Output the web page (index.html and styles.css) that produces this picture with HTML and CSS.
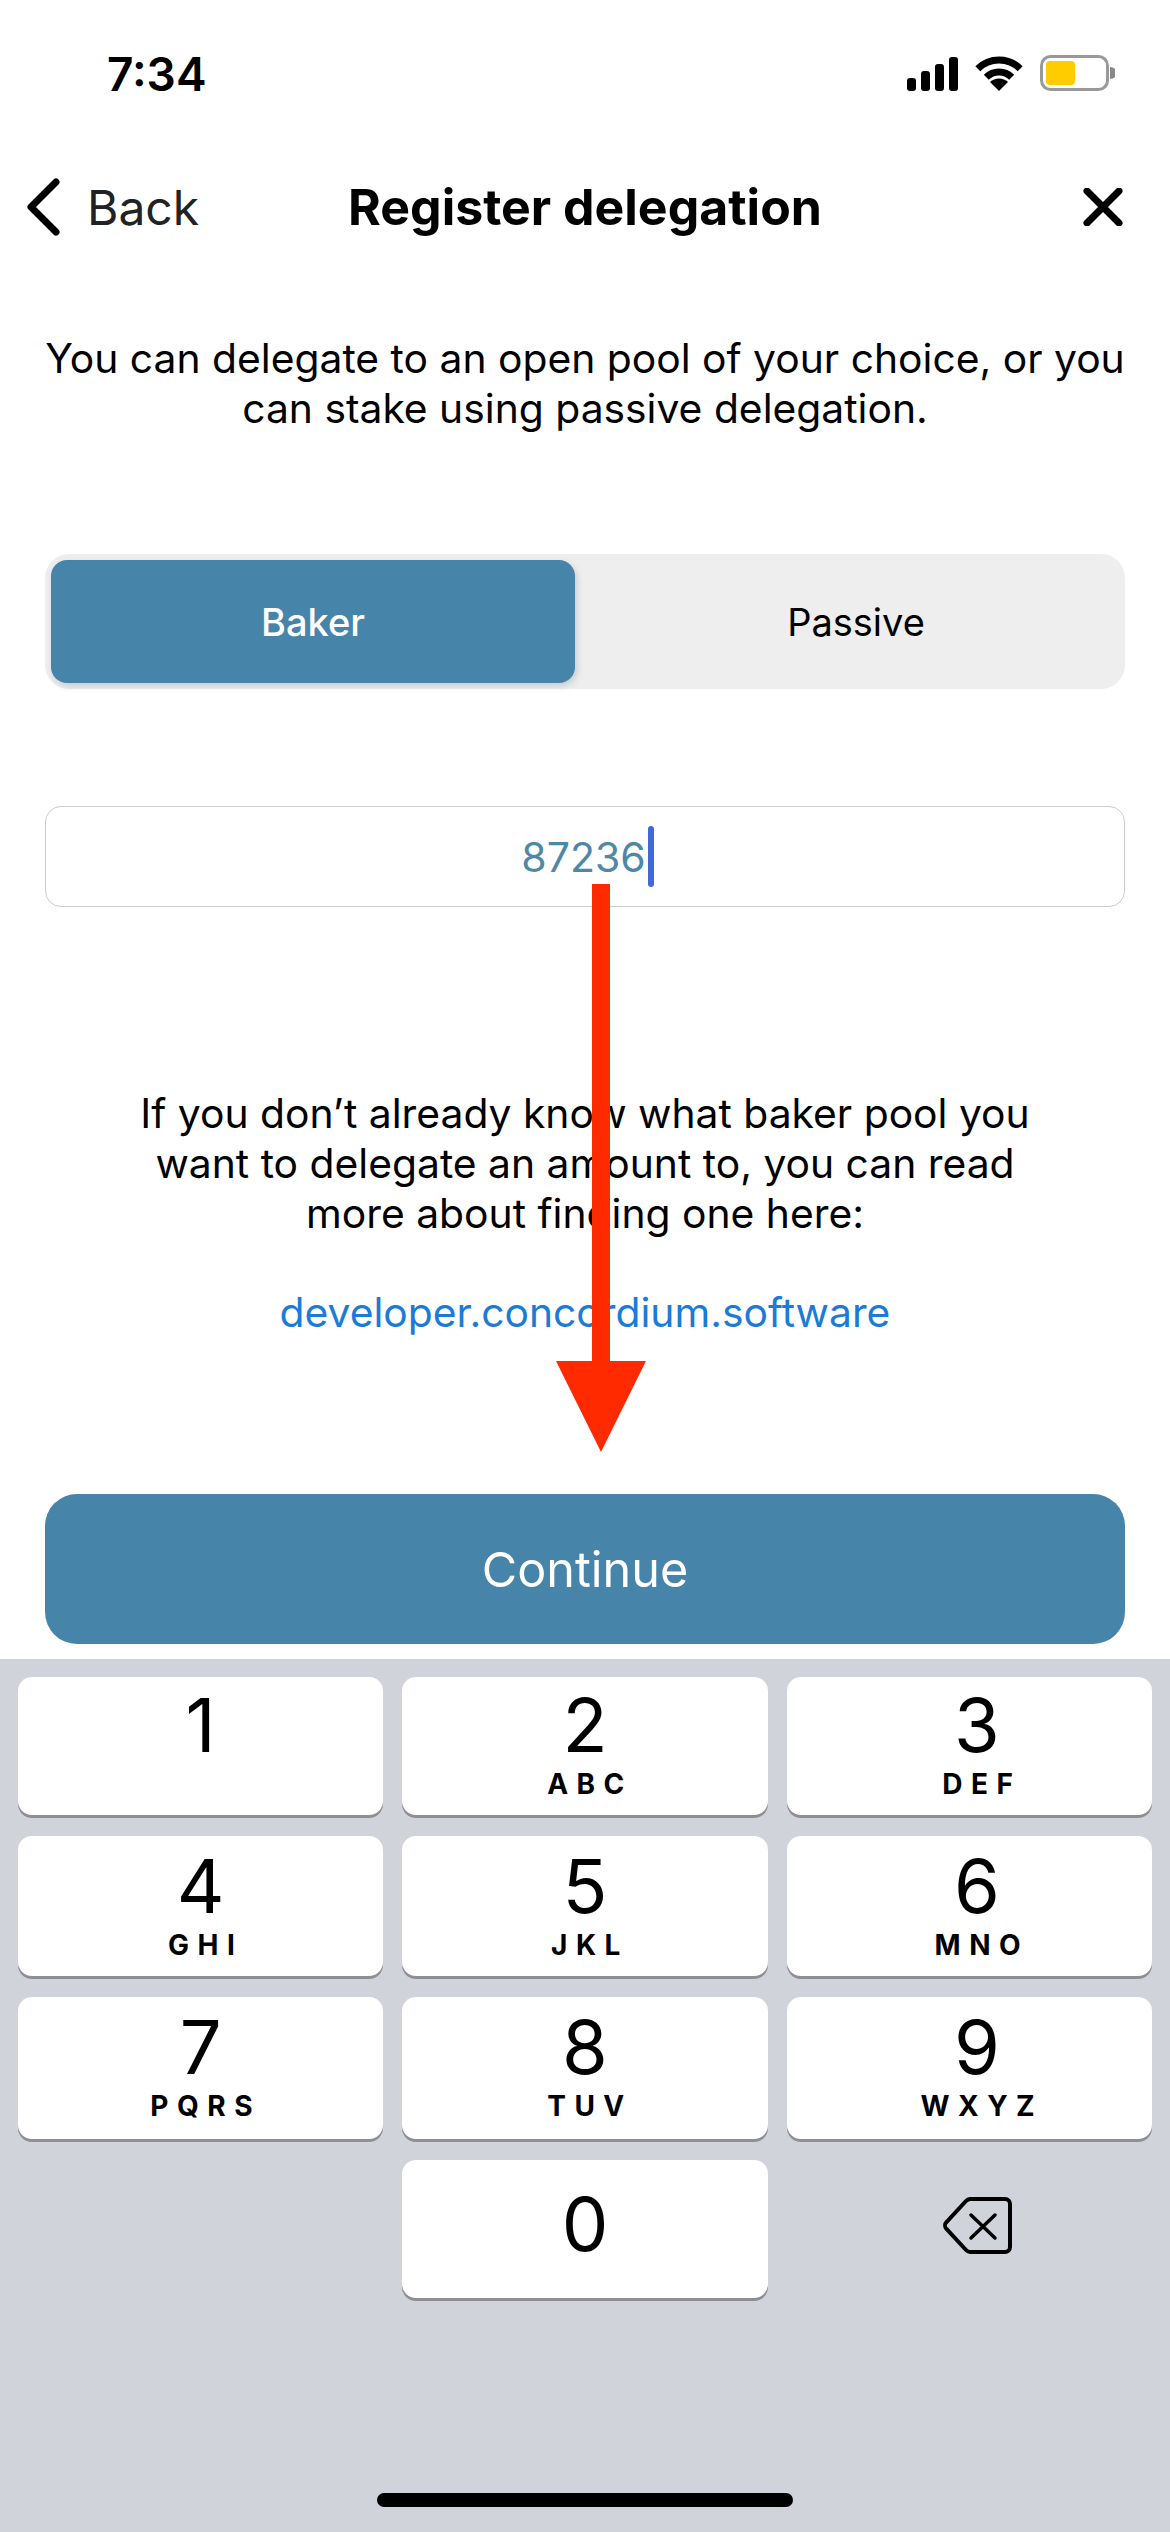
FILE: index.html
```html
<!DOCTYPE html>
<html lang="en">
<head>
    <meta charset="UTF-8">
    <meta name="viewport" content="width=device-width, initial-scale=1.0">
    <title>Register delegation</title>
    <link rel="stylesheet" href="styles.css">
</head>
<body>
    <div class="screen">
        <div class="status-bar">
            <span class="status-time">7:34</span>
            <div class="status-icons">
                <svg class="icon-signal" width="51" height="34" viewBox="0 0 51 34">
                    <rect x="0" y="21" width="9" height="13" rx="3"/>
                    <rect x="14" y="14" width="9" height="20" rx="3"/>
                    <rect x="28" y="7" width="9" height="27" rx="3"/>
                    <rect x="42" y="0" width="9" height="34" rx="3"/>
                </svg>
                <svg class="icon-wifi" width="48" height="36" viewBox="0 0 48 36">
                    <path d="M2.8 13.8A30 30 0 0 1 45.2 13.8" fill="none" stroke="#000" stroke-width="7"/>
                    <path d="M11.3 22.3A18 18 0 0 1 36.7 22.3" fill="none" stroke="#000" stroke-width="7"/>
                    <path d="M24 36L15 27A13 13 0 0 1 33 27Z"/>
                </svg>
                <svg class="icon-battery" width="75" height="36" viewBox="0 0 75 36">
                    <rect x="1.5" y="1.5" width="66" height="33" rx="9" fill="#fff" stroke="#999" stroke-width="3"/>
                    <rect x="6" y="6" width="29" height="24" rx="4" fill="#ffcc00"/>
                    <path d="M70 12a7 6 0 0 1 0 12Z" fill="#888"/>
                </svg>
            </div>
        </div>

        <div class="nav-bar">
            <div class="nav-back">
                <svg width="36" height="60" viewBox="0 0 36 60">
                    <path d="M31 5L6 30L31 55" fill="none" stroke="#000" stroke-width="7" stroke-linecap="round" stroke-linejoin="round"/>
                </svg>
                <span>Back</span>
            </div>
            <h1 class="nav-title">Register delegation</h1>
            <div class="nav-close">
                <svg width="40" height="38" viewBox="0 0 40 38">
                    <path d="M4 3L36 35M36 3L4 35" fill="none" stroke="#000" stroke-width="7" stroke-linecap="round"/>
                </svg>
            </div>
        </div>

        <p class="intro">You can delegate to an open pool of your choice, or you<br>can stake using passive delegation.</p>

        <div class="segment">
            <div class="segment-item segment-active">Baker</div>
            <div class="segment-item segment-passive">Passive</div>
        </div>

        <div class="amount-input">
            <span class="amount-value">87236</span><span class="caret"></span>
        </div>

        <p class="info">If you don’t already know what baker pool you<br>want to delegate an amount to, you can read<br>more about finding one here:</p>
        <a class="info-link" href="#">developer.concordium.software</a>

        <button class="continue-button">Continue</button>

        <div class="keyboard">
            <div class="key-grid">
                <div class="key"><span class="key-digit">1</span></div>
                <div class="key"><span class="key-digit">2</span><span class="key-letters">ABC</span></div>
                <div class="key key-right"><span class="key-digit">3</span><span class="key-letters">DEF</span></div>
                <div class="key key-low"><span class="key-digit">4</span><span class="key-letters">GHI</span></div>
                <div class="key key-low"><span class="key-digit">5</span><span class="key-letters">JKL</span></div>
                <div class="key key-low key-right"><span class="key-digit">6</span><span class="key-letters">MNO</span></div>
                <div class="key key-low"><span class="key-digit">7</span><span class="key-letters">PQRS</span></div>
                <div class="key key-low"><span class="key-digit">8</span><span class="key-letters">TUV</span></div>
                <div class="key key-low key-right"><span class="key-digit">9</span><span class="key-letters">WXYZ</span></div>
                <div class="key-empty"></div>
                <div class="key key-zero"><span class="key-digit">0</span></div>
                <div class="key-delete">
                    <svg width="69" height="57" viewBox="0 0 69 57">
                        <path d="M27 2H62a5 5 0 0 1 5 5V50a5 5 0 0 1-5 5H27a6 6 0 0 1-4-2L3.500 32a5 5 0 0 1 0-7L23 4a6 6 0 0 1 4-2Z" fill="none" stroke="#000" stroke-width="4"/>
                        <path d="M28 18L52 41M52 18L28 41" fill="none" stroke="#000" stroke-width="3.500" stroke-linecap="round"/>
                    </svg>
                </div>
            </div>
            <div class="home-bar"></div>
        </div>

        <svg class="annotation-arrow" width="90" height="568" viewBox="0 0 90 568">
            <path d="M36 0H54V477H90L45 568L0 477H36Z" fill="#ff2a00"/>
        </svg>
    </div>
</body>
</html>
```

FILE: styles.css
```css
body {
    margin: 0;
    background: #fff;
    font-family: Inter, "Noto Sans", sans-serif;
    color: #000;
}
.screen {
    position: relative;
    width: 1170px;
    height: 2532px;
    display: flex;
    flex-direction: column;
    overflow: hidden;
}
.status-bar {
    height: 157px;
    box-sizing: border-box;
    padding: 46px 55px 0 107px;
    display: flex;
    justify-content: space-between;
    align-items: flex-start;
}
.status-time {
    font-size: 46px;
    font-weight: 600;
    line-height: 56px;
}
.status-icons {
    display: flex;
    align-items: flex-end;
    gap: 17px;
    padding-top: 9px;
}
.nav-bar {
    height: 100px;
    padding: 0 25px;
    display: grid;
    grid-template-columns: 1fr auto 1fr;
    align-items: center;
}
.nav-back {
    display: flex;
    align-items: center;
    gap: 26px;
    font-size: 48px;
    color: #222;
}
.nav-title {
    margin: 0;
    font-size: 50px;
    font-weight: 700;
}
.nav-close {
    display: flex;
    justify-content: flex-end;
    padding-right: 22px;
}
.intro {
    margin: 76px 0 121px;
    text-align: center;
    font-size: 40.8px;
    line-height: 50px;
}
.segment {
    margin: 0 45px;
    height: 135px;
    box-sizing: border-box;
    padding: 6px 0 6px 6px;
    display: flex;
    background: #eee;
    border-radius: 24px;
}
.segment-item {
    flex: 1;
    display: flex;
    align-items: center;
    justify-content: center;
    font-size: 38px;
}
.segment-active {
    flex: 0 0 524px;
    background: #4684aa;
    color: #fff;
    font-weight: 500;
    border-radius: 16px;
    box-shadow: 2px 3px 6px rgba(70, 110, 130, 0.25);
}
.segment-passive {
    padding-left: 12px;
}
.amount-input {
    margin: 117px 45px 0;
    height: 101px;
    box-sizing: border-box;
    padding-left: 5px;
    border: 1px solid #ccc;
    border-radius: 16px;
    display: flex;
    align-items: center;
    justify-content: center;
}
.amount-value {
    font-size: 41px;
    color: #4f87a6;
}
.caret {
    width: 6px;
    height: 61px;
    margin-left: 2px;
    background: #4169d8;
    border-radius: 3px;
}
.info {
    margin: 181px 0 49px;
    text-align: center;
    font-size: 40.8px;
    line-height: 50px;
}
.info-link {
    display: block;
    text-align: center;
    font-size: 40.8px;
    line-height: 50px;
    color: #1a7bd8;
    text-decoration: none;
}
.continue-button {
    margin: 157px 45px 15px;
    height: 150px;
    border: none;
    border-radius: 32px;
    background: #4684aa;
    color: #fff;
    font-family: inherit;
    font-size: 48.500px;
}
.keyboard {
    flex: 1;
    background: #d1d3da;
    padding: 18px 18px 0;
    display: flex;
    flex-direction: column;
}
.key-grid {
    display: grid;
    grid-template-columns: repeat(3, 1fr);
    grid-template-rows: 138px 140px 142px 138px;
    gap: 21px 19px;
}
.key {
    background: #fff;
    border-radius: 14px;
    box-shadow: 0 3px 0 #8e8e93;
    display: flex;
    flex-direction: column;
    align-items: center;
    padding-top: 11px;
    box-sizing: border-box;
}
.key-low {
    padding-top: 13px;
}
.key-right {
    padding-left: 15px;
}
.key-zero {
    padding-top: 27px;
}
.key-digit {
    font-size: 74px;
    line-height: 74px;
}
.key-letters {
    margin-top: 5px;
    padding-left: 10px;
    font-size: 28px;
    font-weight: 700;
    line-height: 34px;
    letter-spacing: 8.500px;
}
.key-delete {
    display: flex;
    align-items: center;
    justify-content: center;
    padding: 0 0 8px 17px;
}
.home-bar {
    width: 416px;
    height: 14px;
    margin: 195px auto 0;
    background: #000;
    border-radius: 7px;
}
.annotation-arrow {
    position: absolute;
    left: 556px;
    top: 884px;
}
```
